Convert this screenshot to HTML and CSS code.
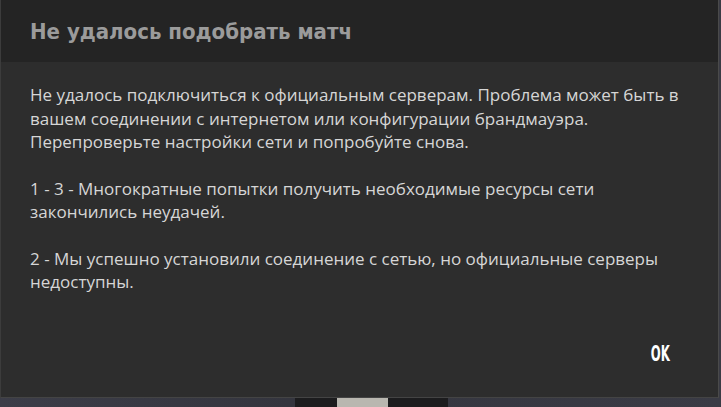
FILE: index.html
```
<!DOCTYPE html>
<html lang="ru">
<head>
<meta charset="utf-8">
<link rel="stylesheet" href="styles.css">
</head>
<body>
<div class="dialog">
  <div class="dialog-header">
    <h1 class="dialog-title">Не удалось подобрать матч</h1>
  </div>
  <div class="dialog-body">
    <p>Не удалось подключиться к официальным серверам. Проблема может быть в<br>вашем соединении с интернетом или конфигурации брандмауэра.<br>Перепроверьте настройки сети и попробуйте снова.</p>
    <p>1 - 3 - Многократные попытки получить необходимые ресурсы сети<br>закончились неудачей.</p>
    <p>2 - Мы успешно установили соединение с сетью, но официальные серверы<br>недоступны.</p>
  </div>
  <div class="dialog-footer">
    <button class="ok-button">OK</button>
  </div>
</div>
<div class="scene">
  <span class="scene-dark scene-a"></span>
  <span class="scene-light"></span>
  <span class="scene-dark scene-b"></span>
</div>
</body>
</html>
```
FILE: styles.css
```
html, body {
  margin: 0;
  padding: 0;
}
body {
  width: 721px;
  height: 407px;
  overflow: hidden;
  background: #3a3b44;
}
.dialog {
  width: 717px;
  height: 397px;
  display: flex;
  flex-direction: column;
  background: #2d2d2d;
  border-left: 1px solid #3c3c3c;
  border-right: 1px solid #4a4a4a;
  border-bottom: 1px solid #444;
}
.dialog-header {
  height: 62px;
  flex: none;
  background: #242424;
  display: flex;
  align-items: center;
  padding-left: 29px;
}
.dialog-title {
  margin: 0;
  font-family: "DejaVu Sans Condensed", "DejaVu Sans", sans-serif;
  font-weight: bold;
  font-size: 22px;
  color: #9b9b9b;
  padding-top: 0;
}
.dialog-body {
  padding: 21px 10px 0 29px;
  font-family: "Open Sans", "Noto Sans", sans-serif;
  font-size: 17px;
  line-height: 23.5px;
  color: #d6d6d6;
  white-space: nowrap;
}
.dialog-body p {
  margin: 0 0 23px 0;
}
.dialog-footer {
  margin-top: auto;
  display: flex;
  justify-content: flex-end;
  padding: 0 42px 31px 0;
}
.ok-button {
  background: none;
  border: none;
  padding: 0;
  font-family: "DejaVu Sans Condensed", "DejaVu Sans", sans-serif;
  font-weight: bold;
  font-size: 21px;
  line-height: 24px;
  color: #ffffff;
  transform: scaleX(0.62);
}
.scene {
  display: flex;
  height: 10px;
  background: linear-gradient(90deg, #3c3d48 0%, #34353e 40%, #3a3b45 100%);
  padding-left: 295px;
}
.scene-dark {
  background: #1c1c1e;
  height: 100%;
}
.scene-a { width: 42px; }
.scene-light { width: 51px; background: #b9b7b0; }
.scene-b { width: 60px; }
```
